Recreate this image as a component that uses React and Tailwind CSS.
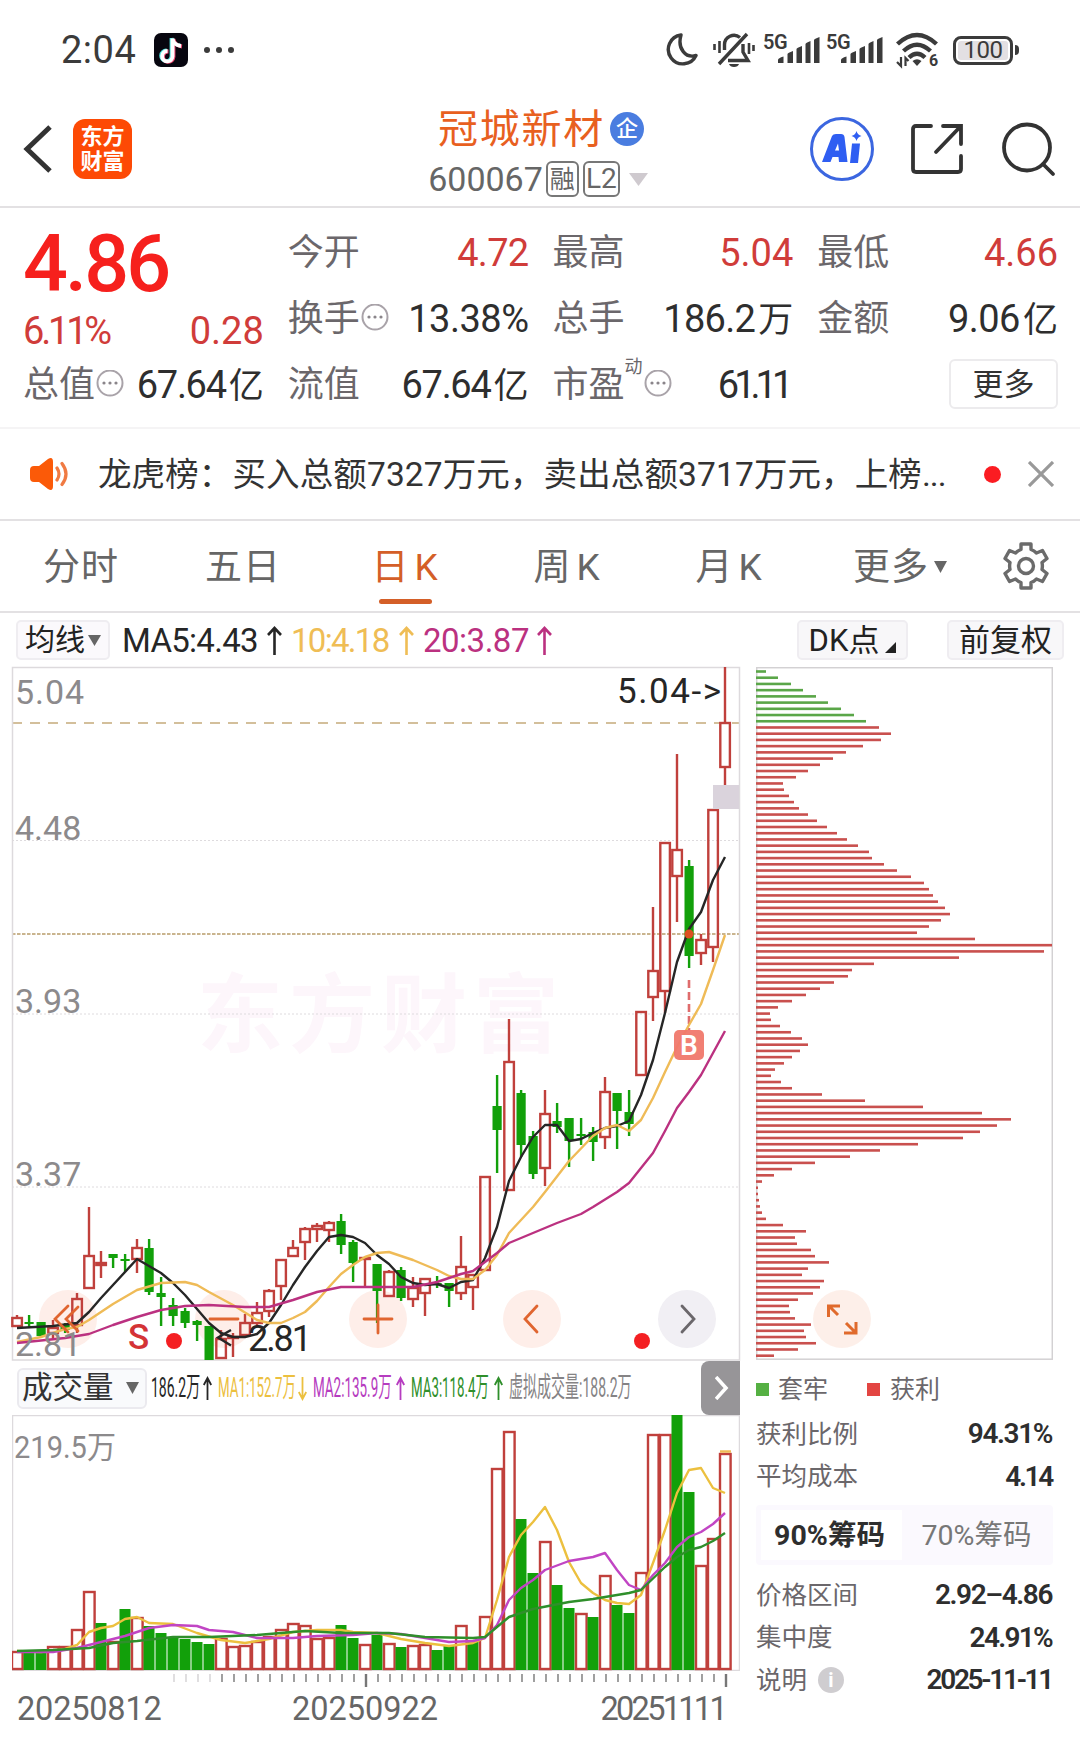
import React from 'react';

const RED = '#c0403c';
const GREEN = '#12a00a';

// [up, bodyTop, bodyBottom, wickTop, wickBottom]
const candles = [
  [1, 651, 659, 648, 660], [0, 655, 657, 648, 661], [0, 655, 669, 655, 670], [1, 661, 666, 653, 673],
  [0, 658, 663, 656, 666], [1, 632, 658, 626, 666], [1, 589, 621, 540, 621], [1, 596, 598, 584, 611],
  [0, 587, 591, 587, 601], [0, 592, 594, 587, 605], [1, 581, 592, 572, 606], [0, 581, 625, 572, 628],
  [0, 626, 630, 610, 659], [0, 638, 649, 631, 659], [0, 644, 656, 641, 661], [0, 654, 658, 653, 674],
  [0, 659, 693, 659, 693], [1, 672, 691, 663, 691], [1, 670, 671, 666, 690], [1, 656, 668, 647, 669],
  [1, 646, 656, 635, 660], [1, 624, 644, 622, 650], [1, 593, 619, 593, 633], [1, 581, 589, 573, 590],
  [1, 562, 575, 560, 593], [1, 559, 562, 556, 575], [1, 556, 563, 554, 575], [0, 554, 578, 547, 587],
  [0, 575, 596, 573, 615], [1, 591, 592, 591, 619], [0, 597, 624, 597, 656], [1, 605, 629, 603, 630],
  [0, 603, 631, 600, 634], [1, 621, 632, 610, 640], [1, 612, 626, 612, 649], [0, 616, 618, 609, 621],
  [0, 616, 624, 616, 640], [1, 600, 626, 569, 633], [1, 608, 620, 608, 643], [1, 510, 603, 510, 603],
  [0, 439, 463, 408, 506], [1, 395, 523, 352, 523], [0, 426, 478, 423, 490], [0, 469, 507, 464, 512],
  [1, 447, 501, 423, 519], [0, 454, 460, 436, 466], [0, 451, 474, 451, 500], [0, 467, 469, 451, 478],
  [0, 465, 475, 460, 494], [1, 425, 470, 410, 482], [0, 426, 444, 426, 482], [0, 445, 457, 423, 469],
  [1, 345, 408, 345, 408], [1, 304, 330, 240, 354], [1, 176, 324, 176, 346], [1, 183, 209, 87, 255],
  [0, 199, 289, 193, 301], [1, 273, 286, 267, 298], [1, 143, 280, 143, 295], [1, 56, 100, 0, 118],
];

// [candle index, y]
const ma5 = [[0, 661], [3, 659], [5, 656], [6, 645], [7, 631], [10, 592], [12, 606], [13, 616], [14, 628], [15, 642], [16, 656], [17, 666], [18, 670], [19, 670], [20, 667], [21, 656], [22, 638], [23, 618], [24, 600], [25, 584], [26, 570], [27, 568], [28, 570], [29, 576], [30, 588], [31, 597], [32, 610], [33, 616], [34, 618], [35, 617], [36, 621], [37, 615], [38, 613], [39, 591], [40, 560], [41, 514], [42, 490], [43, 470], [44, 458], [45, 458], [46, 474], [47, 472], [48, 466], [49, 461], [50, 459], [51, 454], [52, 428], [53, 393], [54, 346], [55, 295], [56, 262], [57, 245], [58, 213], [59, 190]];
const ma10 = [[0, 675], [2, 670], [4, 662], [5, 660], [6, 653], [8, 637], [10, 623], [12, 616], [14, 615], [15, 618], [16, 625], [18, 638], [20, 653], [21, 656], [22, 656], [23, 651], [24, 645], [25, 634], [26, 620], [27, 607], [28, 598], [29, 590], [30, 586], [31, 585], [33, 593], [35, 603], [36, 609], [37, 612], [38, 612], [39, 603], [40, 588], [41, 566], [42, 553], [43, 540], [44, 525], [46, 494], [48, 469], [49, 461], [50, 458], [51, 464], [52, 453], [53, 431], [54, 405], [55, 380], [56, 358], [57, 337], [58, 303], [59, 268]];
const ma20 = [[0, 676], [4, 671], [6, 667], [8, 658], [10, 650], [12, 643], [14, 639], [16, 638], [19, 640], [21, 640], [23, 633], [25, 625], [27, 620], [30, 620], [33, 620], [35, 615], [37, 607], [38, 604], [39, 595], [40, 586], [41, 576], [42, 571], [43, 566], [45, 556], [47, 547], [48, 540], [50, 525], [51, 516], [52, 501], [53, 486], [54, 464], [55, 441], [56, 425], [57, 408], [59, 364]];

const volumes = [236, 238, 238, 231, 231, 214, 176, 208, 226, 194, 202, 211, 218, 222, 224, 227, 229, 223, 231, 230, 226, 221, 214, 208, 210, 223, 222, 210, 223, 229, 220, 228, 232, 230, 229, 235, 231, 210, 225, 201, 53, 16, 104, 158, 126, 170, 193, 198, 202, 160, 190, 198, 157, 19, 19, 0, 77, 150, 123, 38];
const volumeUp = [0, 3, 4, 5, 6, 8, 10, 17, 18, 19, 20, 21, 22, 23, 24, 25, 26, 29, 31, 33, 34, 37, 39, 40, 41, 44, 47, 49, 52, 53, 54, 57, 58, 59];

const vol1 = [[0, 236], [2, 237], [4, 234], [5, 230], [6, 217], [7, 213], [8, 211], [9, 204], [10, 202], [11, 208], [13, 209], [15, 218], [17, 225], [19, 228], [21, 224], [23, 217], [25, 215], [27, 215], [28, 217], [30, 218], [32, 224], [34, 228], [36, 231], [38, 228], [39, 223], [40, 185], [41, 142], [42, 120], [43, 107], [44, 92], [45, 115], [46, 147], [47, 168], [48, 178], [49, 185], [50, 188], [51, 189], [52, 180], [53, 148], [54, 115], [55, 78], [56, 55], [57, 53], [58, 73], [59, 78]];
const vol2 = [[0, 237], [3, 237], [5, 233], [7, 227], [9, 221], [11, 213], [13, 210], [15, 211], [16, 215], [18, 217], [20, 223], [23, 223], [25, 221], [28, 220], [30, 218], [32, 219], [34, 223], [36, 227], [38, 226], [39, 223], [40, 210], [41, 185], [42, 173], [43, 165], [44, 155], [46, 146], [48, 142], [49, 138], [50, 155], [51, 170], [52, 175], [53, 160], [54, 148], [55, 132], [56, 122], [57, 117], [58, 109], [59, 98]];
const vol3 = [[0, 236], [3, 235], [6, 233], [8, 228], [10, 226], [13, 222], [16, 222], [20, 220], [24, 216], [27, 218], [31, 218], [34, 222], [38, 223], [39, 222], [40, 212], [41, 202], [43, 194], [46, 187], [48, 184], [50, 180], [51, 178], [52, 175], [54, 152], [55, 142], [56, 135], [57, 132], [58, 126], [59, 118]];

const chips = [
  10, 22, 35, 47, 60, 72, 85, 98, 110,
  123, 135, 125, 107, 90, 77, 64, 52, 40, 27, 28, 33, 38, 43, 52, 61, 71, 81, 91, 102,
  113, 116, 128, 141, 155, 168, 173, 177, 182, 189, 194, 185, 173, 161, 219, 296, 288, 203, 118, 96,
  92, 78, 64, 50, 36, 22, 14, 15, 24, 35, 46, 52, 44, 36, 28, 19, 15, 25, 36, 66,
  109, 167, 226, 255, 241, 224, 207, 162, 124, 94, 59, 36, 18, 6, 2, 2, 3, 4, 6, 10,
  27, 50, 39, 41, 55, 59, 73, 52, 46, 68, 64, 57, 42, 33, 34, 39, 55, 48, 50, 60, 42, 18,
];

// chart controls, drawn along the bottom of the price chart
const controls = [
  { x: 56, d: 'M0 -13L-13 0L0 13M10 -12L-2 0L10 12' },
  { x: 212, d: 'M-14 0H14' },
  { x: 366, d: 'M-14 0H14M0 -14V14' },
  { x: 520, d: 'M5 -13L-7 0L5 13' },
  { x: 675, d: 'M-5 -13L7 0L-5 13', gray: true },
];

const cx = (i) => 5 + 12 * i;
const toPoints = (line) => line.map(([i, y]) => `${cx(i)},${y}`).join(' ');

const Line = ({ data, color, width = 2.4 }) => (
  <polyline points={toPoints(data)} fill="none" stroke={color} strokeWidth={width} strokeLinejoin="round" />
);

const Signal = () => (
  <div className="flex w-[57px] h-[34px]">
    <span className="w-[26px] shrink-0 text-[20px] leading-[24px] -mt-[3px] font-semibold tracking-[-0.5px]">5G</span>
    <svg className="-ml-[11px] mt-[4px] shrink-0" width="42" height="27" fill="#3b3b3b">
      <path d="M0 26v-3q0-2 5.500-3.500v6.500z M9.500 26v-9q0-1 5.500-3v12z M18.500 26V12q0-1 5.500-3v17z M27.500 26V7q0-1 5-3v22z M36 26V3q0-1 5.500-3v26z" />
    </svg>
  </div>
);

const StatusBar = () => (
  <div className="h-[100px] pl-[61px] pr-[61px] flex items-center text-[#3b3b3b]">
    <span className="text-[38px] leading-none w-[93px] tracking-[0.5px]">2:04</span>
    <svg width="34" height="34" viewBox="0 0 34 34">
      <rect width="34" height="34" rx="7" fill="#07060f" />
      <g fill="none" strokeWidth="3.800">
        <path d="M17.500 5v18a5.200 5.200 0 1 1-5-5.500M17.500 5q1 6.500 8.500 7.500" stroke="#4fe0dc" />
        <path d="M19.500 6v18a5.200 5.200 0 1 1-5-5.500M19.500 6q1 6.500 8.500 7.500" stroke="#ee4a74" />
        <path d="M18.500 5.500v18a5.200 5.200 0 1 1-5-5.500M18.500 5.500q1 6.500 8.500 7.500" stroke="#fff" />
      </g>
    </svg>
    <div className="flex gap-[6px] ml-[16px]">
      <i className="size-[6px] rounded-full bg-[#3b3b3b]" />
      <i className="size-[6px] rounded-full bg-[#3b3b3b]" />
      <i className="size-[6px] rounded-full bg-[#3b3b3b]" />
    </div>
    <div className="ml-auto flex items-center">
      <svg width="34" height="34" viewBox="0 0 34 34" fill="none" stroke="#3b3b3b" strokeWidth="3.400" strokeLinejoin="round">
        <path d="M17 2a14.500 14.500 0 1 0 15 20.500C22 25.500 13 16 17 2z" />
      </svg>
      <svg className="ml-[15px]" width="42" height="36" viewBox="0 0 42 36" fill="none" stroke="#3b3b3b" strokeWidth="3.400">
        <path d="M11.500 18v-5a9.500 9.500 0 0 1 15.500-7.500M30 12v8l5 8.500H15M34 2L6 32" />
        <path d="M1.500 12v6M6.500 9v12M36 11v11M40.500 13v6" strokeWidth="2.600" />
        <path d="M16 32h10q-1 3-5 3t-5-3z" fill="#3b3b3b" stroke="none" />
      </svg>
      <div className="ml-[8px] mr-[6px]"><Signal /></div>
      <Signal />
      <svg className="ml-[13px] overflow-visible" width="43" height="36" viewBox="0 0 43 36" fill="none" stroke="#3b3b3b" strokeWidth="4.400">
        <path d="M1.500 12q19.500-18 39 0M7.500 19q13.500-12.500 27 0" />
        <path d="M13 25.500q8-7.500 16 0" />
        <path d="M16.500 29q4.500-3.500 9 0l-4.500 5z" fill="#3b3b3b" stroke="none" />
        <path d="M5 25v9l-4-4M9.500 34v-8l3 3" strokeWidth="2.200" />
        <text x="33" y="34" fontSize="16" fontWeight="700" fill="#3b3b3b" stroke="none">6</text>
      </svg>
      <div className="ml-[14px] w-[60px] h-[29px] border-[3px] border-[#3b3b3b] rounded-[8px] p-[2px]">
        <div className="h-full rounded-[3px] bg-[#e3e0e3] flex items-center justify-center text-[24px] leading-none tracking-[-0.5px]">100</div>
      </div>
      <i className="ml-[2px] w-[4px] h-[10px] rounded-r bg-[#3b3b3b]" />
    </div>
  </div>
);

const Header = () => (
  <div className="h-[108px] border-b-2 border-[#e3e1e3] pl-[22px] pr-[24px] flex justify-between">
    <div className="flex items-center w-[300px] pb-[8px]">
      <svg width="31" height="52" viewBox="0 0 31 52" fill="none" stroke="#333" strokeWidth="5">
        <path d="M28 4L5 26l23 22" />
      </svg>
      <div className="ml-[20px] w-[59px] h-[60px] rounded-[12px] bg-[#fd4a05] text-white font-bold text-[22px] leading-[25px] flex flex-col items-center justify-center">
        <span>东方</span>
        <span>财富</span>
      </div>
    </div>
    <div className="flex flex-col items-center pt-[6px]">
      <div className="flex items-center h-[46px] pl-[4px]">
        <span className="text-[40px] leading-none tracking-[1.700px] pt-[2px] text-[#e8601f]">冠城新材</span>
        <span className="ml-[5px] size-[34px] rounded-full bg-[#4a7de0] text-white text-[22px] font-medium leading-none flex items-center justify-center">企</span>
      </div>
      <div className="flex items-center h-[44px] pr-[2px] text-[#666] mt-[5px]">
        <span className="text-[34px] leading-none">600067</span>
        <span className="ml-[3px] w-[33px] h-[36px] border-2 border-[#777] rounded-[6px] text-[25px] leading-none flex items-center justify-center">融</span>
        <span className="ml-[4px] w-[37px] h-[36px] border-2 border-[#777] rounded-[6px] text-[28px] leading-none flex items-center justify-center">L2</span>
        <svg className="ml-[9px]" width="19" height="13"><path d="M0 0h19l-9.500 13z" fill="#cfcacf" /></svg>
      </div>
    </div>
    <div className="flex items-center justify-end w-[300px] pb-[8px]">
      <svg width="66" height="66" viewBox="0 0 66 66">
        <circle cx="33" cy="33" r="30.500" fill="none" stroke="#3b66e0" strokeWidth="3" />
        <g fill="#2f5ef2">
          <path d="M13 46l10-26q1-2 4-2h5q3 0 3.500 3l3 25h-8.500l-.5-5h-6l-2 5z M26 34.500h4l-1-7z" fillRule="evenodd" />
          <path d="M43 27.500h8L49 47h-8z" />
          <path d="M47.500 15q1 4 5 5-4 1-5 5-1-4-5-5 4-1 5-5z" />
        </g>
      </svg>
      <svg className="ml-[36px]" width="52" height="52" viewBox="0 0 52 52" fill="none" stroke="#333" strokeWidth="3.800" strokeLinecap="round">
        <path d="M20 3H5q-3 0-3 3v40q0 3 3 3h42q3 0 3-3V33M32 3h18v18M49 4L25 29" />
      </svg>
      <svg className="ml-[38px]" width="55" height="55" viewBox="0 0 55 55" fill="none" stroke="#333" strokeWidth="3.800" strokeLinecap="round">
        <circle cx="26" cy="25.500" r="23" />
        <path d="M42 42l10 10" />
      </svg>
    </div>
  </div>
);

const More = () => (
  <svg className="ml-[1px]" width="28" height="28" viewBox="0 0 28 28">
    <circle cx="14" cy="13" r="12.500" fill="none" stroke="#a9a3a9" strokeWidth="2" />
    <g fill="#8a858a"><circle cx="8" cy="13" r="1.600" /><circle cx="14" cy="13" r="1.600" /><circle cx="20" cy="13" r="1.600" /></g>
  </svg>
);

const Stat = ({ label, value, unit, red, info, sup }) => (
  <div className="h-[66px] flex items-center leading-none">
    <span className="text-[36px] pt-[2px] text-[#6b676b]">{label}</span>
    {sup && <span className="text-[18px] text-[#6b676b] -mt-[34px]">{sup}</span>}
    {info && <More />}
    <span className={`ml-auto pt-[2px] text-[38px] ${red ? 'text-[#d03c3a]' : 'text-[#2e2e2e]'}`}>
      {value}
      {unit && <span className="text-[35px] ml-[3px]">{unit}</span>}
    </span>
  </div>
);

const Quote = () => (
  <div className="h-[221px] border-b-2 border-[#f5f4f5] pl-[23px] pr-[22px] flex gap-[24px]">
    <div className="w-[241px]">
      <div className="h-[106px] pt-[17px] text-[79px] leading-none font-medium text-[#f6201d] tracking-[-2.800px]">4.86</div>
      <div className="h-[37px] pb-[4px] flex justify-between items-center text-[38px] leading-none text-[#d03c3a]">
        <span className="tracking-[-3.200px]">6.11%</span>
        <span>0.28</span>
      </div>
      <Stat label="总值" info value={<span className="tracking-[-1.300px]">67.64</span>} unit="亿" />
    </div>
    <div className="w-[241px] pt-[11px]">
      <Stat label="今开" value={<span className="tracking-[-0.700px]">4.72</span>} red />
      <Stat label="换手" info value={<span className="tracking-[-0.500px]">13.38%</span>} />
      <Stat label="流值" value={<span className="tracking-[-1.300px]">67.64</span>} unit="亿" />
    </div>
    <div className="w-[241px] pt-[11px]">
      <Stat label="最高" value="5.04" red />
      <Stat label="总手" value={<span className="tracking-[-0.700px]">186.2</span>} unit="万" />
      <Stat label="市盈" sup="动" info value={<span className="tracking-[-5px] mr-[5px]">61.11</span>} />
    </div>
    <div className="w-[241px] pt-[11px]">
      <Stat label="最低" value="4.66" red />
      <Stat label="金额" value={<span className="tracking-[-0.500px]">9.06</span>} unit="亿" />
      <div className="h-[66px] flex items-center justify-end">
        <span className="w-[109px] h-[50px] border-2 border-[#ecebed] rounded-[6px] flex items-center justify-center text-[31px] leading-none text-[#333]">更多</span>
      </div>
    </div>
  </div>
);

const News = () => (
  <div className="h-[92px] border-b-2 border-[#e3e1e3] pl-[29px] pr-[26px] flex items-center">
    <svg width="40" height="34" viewBox="0 0 40 34">
      <path d="M1 13q0-4 4-4h5L19 2q5-3 5 3v24q0 6-5 3L10 25H5q-4 0-4-4z" fill="#fb5a08" />
      <path d="M28 11q4 6 0 12M33 6.500q8 10.500 0 21" fill="none" stroke="#f07a42" strokeWidth="3.200" strokeLinecap="round" />
    </svg>
    <span className="ml-[29px] pt-[2px] text-[33.500px] leading-none text-[#333] whitespace-nowrap w-[850px] tracking-[0.120px]">
      龙虎榜：买入总额7327万元，卖出总额3717万元，上榜<span className="tracking-[-1px]">...</span>
    </span>
    <i className="ml-auto size-[17px] rounded-full bg-[#fb1c22]" />
    <svg className="ml-[27px]" width="26" height="26" viewBox="0 0 26 26" stroke="#999" strokeWidth="3.200"><path d="M1 1l24 24M25 1L1 25" /></svg>
  </div>
);

const tabs = ['分时', '五日', '日K', '周K', '月K'];

const Tabs = () => (
  <div className="h-[92px] border-b-2 border-[#e3e1e3] flex text-[37px] leading-none text-[#666] tracking-[1px]">
    {tabs.map((t) => (
      <div key={t} className={`w-[162px] flex flex-col items-center pt-[28px] ${t === '日K' ? 'text-[#d45f28]' : ''}`}>
        {t.endsWith('K') ? <span>{t[0]}<span className="ml-[5px]">K</span></span> : <span>{t}</span>}
        {t === '日K' && <i className="mt-[13px] w-[53px] h-[5px] rounded-full bg-[#d45f28]" />}
      </div>
    ))}
    <div className="w-[180px] flex justify-center pt-[28px]">
      <span>更多</span>
      <svg className="ml-[5px] mt-[12px]" width="13" height="12"><path d="M0 0h13l-6.500 12z" fill="#666" /></svg>
    </div>
    <svg className="ml-[12px] mt-[21px]" width="48" height="48" viewBox="0 0 48 48" fill="none" stroke="#6b6b6b" strokeWidth="3.400" strokeLinejoin="round">
      <path d="M19 2h10v5.500q3 1 5.500 3.500l6-2.500 4.500 8-5 4q.8 3.500 0 7l5 4-4.500 8-6-2.500Q32 39.500 29 40.500V46H19v-5.500q-3-1-5.500-3.500l-6 2.500-4.500-8 5-4q-.8-3.500 0-7l-5-4 4.500-8 6 2.500Q16 8.500 19 7.500z" />
      <circle cx="24" cy="24" r="7.500" />
    </svg>
  </div>
);

const Ma = ({ className, color, text }) => (
  <span className={`flex items-center ${className}`}>
    <span>{text}</span>
    <svg className="ml-auto mr-[9px]" width="15" height="29" fill="none" stroke={color} strokeWidth="2.600"><path d="M7.500 29V2M1 9l6.500-7L14 9" /></svg>
  </span>
);

const Indicators = () => (
  <div className="h-[54px] pl-[16px] pr-[16px] flex items-center text-[33px] leading-none whitespace-nowrap">
    <span className="w-[94px] h-[40px] border-2 border-[#efedf1] bg-[#fbf9fc] rounded-[5px] flex items-center justify-center text-[30px] text-[#222]">
      均线
      <svg className="ml-[3px]" width="13" height="11"><path d="M0 0h13l-6.500 11z" fill="#666" /></svg>
    </span>
    <Ma className="ml-[12px] w-[169px] tracking-[-0.700px] text-[#262626]" color="#262626" text="MA5:4.43" />
    <Ma className="w-[132px] tracking-[-1.700px] text-[#efbd55]" color="#efbd55" text="10:4.18" />
    <Ma className="w-[138px] tracking-[-0.500px] text-[#bb3180]" color="#bb3180" text="20:3.87" />
    <span className="ml-auto w-[111px] h-[40px] border-2 border-[#efedf1] bg-[#f8f7f9] rounded-[5px] flex items-center justify-center text-[31px] text-[#222]">
      DK点
      <svg className="ml-[6px] mt-[15px]" width="11" height="11"><path d="M11 0v11H0z" fill="#222" /></svg>
    </span>
    <span className="ml-[39px] w-[117px] h-[40px] border-2 border-[#efedf1] bg-[#f8f7f9] rounded-[5px] flex items-center justify-center text-[31px] text-[#222]">前复权</span>
  </div>
);

const PriceChart = () => (
  <svg width="728" height="694" className="block" overflow="visible">
    <text x="369" y="379" textAnchor="middle" fontSize="86" fontWeight="700" letterSpacing="6" fill="#fdf6fb" style={{ fontFamily: '"Noto Sans CJK SC"' }}>东方财富</text>
    <path d="M0 173.500h728M0 347h728M0 520h728" stroke="#dedbde" strokeDasharray="2 2" />
    <path d="M0 56h728" stroke="#d3bf9b" strokeWidth="1.800" strokeDasharray="10 8" />
    <path d="M0 267h728" stroke="#c9b48e" strokeWidth="1.800" strokeDasharray="3.500 1.500" />
    <rect x="0.500" y="0.500" width="727" height="692.500" fill="none" stroke="#dddadd" strokeWidth="1.500" />
    <g fontSize="34" fill="#8c8a8c">
      <text x="3" y="37" textLength="69">5.04</text>
      <text x="3" y="173">4.48</text>
      <text x="3" y="346">3.93</text>
      <text x="3" y="519">3.37</text>
    </g>
    {controls.map((c) => (
      <circle key={c.x} cx={c.x} cy="652" r="29" fill={c.gray ? '#f1eff4' : '#feeee9'} />
    ))}
    {candles.map(([up, top, bottom, high, low], i) => (up ? (
      <g key={i} stroke={RED} strokeWidth="2.400" fill="none">
        <path d={`M${cx(i)} ${high}V${top}M${cx(i)} ${bottom}V${low}`} />
        <rect x={cx(i) - 4.7} y={top} width="9.600" height={bottom - top} />
      </g>
    ) : (
      <g key={i} fill={GREEN}>
        <rect x={cx(i) - 1.1} y={high} width="2.400" height={low - high} />
        <rect x={cx(i) - 4.5} y={top} width="9.200" height={bottom - top} />
      </g>
    )))}
    <rect x="701" y="118" width="26" height="24" fill="#dad3dc" />
    <path d="M677 313v50" stroke="#df6c6c" strokeWidth="2.600" strokeDasharray="8 4" />
    <Line data={ma5} color="#262626" />
    <Line data={ma10} color="#efbb57" />
    <Line data={ma20} color="#bb3180" />
    <rect x="662" y="363" width="30" height="30" rx="5" fill="#f0786c" fillOpacity="0.950" />
    <text x="677" y="388" textAnchor="middle" fontSize="28" fontWeight="600" fill="#fff">B</text>
    <circle cx="677" cy="267" r="4.500" fill="#dc5022" />
    <text x="605" y="36" fontSize="35" fill="#262626" textLength="104">5.04-&gt;</text>
    {controls.map((c) => (
      <path key={c.x} d={c.d} transform={`translate(${c.x} 652)`} fill="none" stroke={c.gray ? '#6b676b' : '#e06530'} strokeWidth="2.800" strokeLinecap="round" />
    ))}
    <text x="3" y="689" fontSize="34" fill="#8c8a8c">2.81</text>
    <text x="116" y="682" fontSize="35" fontWeight="500" fill="#d43336">S</text>
    <circle cx="162" cy="674" r="8" fill="#f41f22" />
    <circle cx="630" cy="674" r="8" fill="#f41f22" />
    <path d="M219 663L206 670.500L219 678.500" fill="none" stroke="#262626" strokeWidth="2.400" />
    <text x="236" y="684" fontSize="36" fill="#262626" textLength="64">2.81</text>
  </svg>
);

const ChipChart = () => (
  <svg width="297" height="693" className="block">
    <rect x="0.700" y="0.700" width="295.600" height="691.500" fill="none" stroke="#d3d1d3" strokeWidth="1.500" />
    {chips.map((w, i) => (
      <rect key={i} x="0" y={3.2 + i * 6.22} width={w} height="2.600" fill={i < 9 ? '#5aa648' : '#c9504e'} />
    ))}
    <circle cx="86" cy="652" r="29" fill="#fdeee8" fillOpacity="0.950" />
    <path d="M82 648L73 639M72.500 650V639H84M90 656L99 665M100 655V666H88" fill="none" stroke="#e06a2c" strokeWidth="3" />
  </svg>
);

const VolumeChart = () => (
  <svg width="728" height="256" className="block">
    <rect x="0.500" y="0.500" width="727" height="255" fill="none" stroke="#dddadd" strokeWidth="1.500" />
    <text x="2" y="43" fontSize="31" fill="#8c8a8c" textLength="102" lengthAdjust="spacingAndGlyphs">219.5万</text>
    {volumes.map((top, i) => (volumeUp.includes(i) ? (
      <rect key={i} x={cx(i) - 5} y={top + 1} width="10.600" height={253 - top} fill="#fff" stroke={RED} strokeWidth="2.400" />
    ) : (
      <rect key={i} x={cx(i) - 5.5} y={top} width="11" height={255 - top} fill={GREEN} />
    )))}
    <path d="M708 36.500h11" stroke="#efbb57" strokeWidth="2.500" />
    <Line data={vol1} color="#ecc03f" />
    <Line data={vol2} color="#c145c4" />
    <Line data={vol3} color="#2f8f2b" />
  </svg>
);

const DateAxis = () => (
  <div className="w-[728px]">
    <svg width="728" height="17" className="block" overflow="visible">
      {volumes.map((_, i) => i > 12 && (
        <path key={i} d={`M${cx(i) + 1} 3v${i === 29 || i === 59 ? 13 : 8}`} stroke={i < 17 ? '#d3d1d3' : '#777'} strokeWidth={i === 29 || i === 59 ? 2.4 : 1.4} />
      ))}
    </svg>
    <div className="pl-[5px] pr-[15px] pt-[5px] flex justify-between text-[32.500px] leading-none text-[#666]">
      <span className="w-[200px] tracking-[-0.200px]">20250812</span>
      <span className="mr-[12px]">20250922</span>
      <span className="w-[200px] text-right tracking-[-2.700px]">20251111</span>
    </div>
  </div>
);

const ThinArrow = ({ down }) => (
  <svg className="ml-auto mr-[6px] shrink-0" width="9" height="25" fill="none" stroke="currentColor" strokeWidth="1.800">
    <path d={down ? 'M4.500 1v22M.8 16l3.700 7 3.700-7' : 'M4.500 24V2M.8 9l3.700-7 3.700 7'} />
  </svg>
);

const VolumeHeader = () => (
  <div className="h-[54px] pl-[5px] flex items-center leading-none text-[28px] whitespace-nowrap">
    <span className="w-[130px] h-[41px] border-2 border-[#ebeaef] bg-[#f9fafc] rounded-[6px] flex items-center pl-[3px] text-[30.500px] text-[#333]">
      成交量
      <svg className="ml-[12px]" width="13" height="12"><path d="M0 0h13l-6.500 12z" fill="#666" /></svg>
    </span>
    <span className="ml-[4px] w-[67px] flex items-center text-[#262626]">
      <span className="w-[48px]"><span className="inline-block origin-left scale-x-[0.500]">186.2万</span></span>
      <ThinArrow />
    </span>
    <span className="w-[95px] flex items-center text-[#ecc03f]">
      <span className="w-[77px]"><span className="inline-block origin-left scale-x-[0.475]">MA1:152.7万</span></span>
      <ThinArrow down />
    </span>
    <span className="w-[98px] flex items-center text-[#b63cc0]">
      <span className="w-[77px]"><span className="inline-block origin-left scale-x-[0.480]">MA2:135.9万</span></span>
      <ThinArrow />
    </span>
    <span className="w-[98px] flex items-center text-[#2f8f2b]">
      <span className="w-[77px]"><span className="inline-block origin-left scale-x-[0.475]">MA3:118.4万</span></span>
      <ThinArrow />
    </span>
    <span className="w-[150px] text-[#858385]"><span className="inline-block origin-left scale-x-[0.500]">虚拟成交量:188.2万</span></span>
    <span className="ml-auto w-[39px] h-[54px] rounded-l-[8px] bg-[#979598] flex items-center justify-center">
      <svg className="ml-[3px]" width="14" height="24" viewBox="0 0 14 24" fill="none" stroke="#fff" strokeWidth="3.600"><path d="M1 1l10 11L1 23" /></svg>
    </span>
  </div>
);

const ChipRow = ({ label, value, className = '', tight = 'tracking-[-1.400px]' }) => (
  <div className={`h-[42.500px] pr-[1px] flex items-center justify-between leading-none ${className}`}>
    <span className="flex items-center text-[25.500px] text-[#6b676b]">{label}</span>
    <span className={`text-[28px] font-semibold text-[#2e2e2e] ${tight}`}>{value}</span>
  </div>
);

const ChipInfo = () => (
  <div className="w-[297px] pt-[6px]">
    <div className="h-[47px] flex items-center text-[25px] leading-none text-[#6b676b]">
      <i className="size-[13px] bg-[#55b043] mr-[9px]" />套牢
      <i className="size-[13px] bg-[#e34542] ml-[39px] mr-[10px]" />获利
    </div>
    <ChipRow label="获利比例" value="94.31%" />
    <ChipRow label="平均成本" value="4.14" tight="tracking-[-2.300px]" />
    <div className="mt-[7px] h-[60px] bg-[#fbf9fe] rounded-[4px] p-[5px] flex items-center leading-none text-[28.500px]">
      <span className="w-[141px] h-[50px] bg-white flex items-center justify-center pt-[3px] pr-[4px] font-bold text-[#2e2e2e]">90%筹码</span>
      <span className="flex-1 pt-[3px] pl-[3px] text-center text-[#777]">70%筹码</span>
    </div>
    <ChipRow label="价格区间" value="2.92–4.86" className="mt-[9px]" />
    <ChipRow label="集中度" value="24.91%" tight="tracking-[-1.700px]" />
    <ChipRow
      label={<>说明<i className="ml-[11px] size-[26px] rounded-full bg-[#cfcdd0] text-white text-[20px] font-bold not-italic flex items-center justify-center">i</i></>}
      value="2025-11-11"
      tight="tracking-[-2.300px]"
    />
  </div>
);

const App = () => (
  <div className="w-[1080px] h-[1762px] bg-white overflow-hidden font-[Roboto,'Noto_Sans_CJK_SC',sans-serif]">
    <StatusBar />
    <Header />
    <Quote />
    <News />
    <Tabs />
    <Indicators />
    <div className="flex pl-[12px]">
      <div className="w-[728px]">
        <PriceChart />
        <VolumeHeader />
        <VolumeChart />
        <DateAxis />
      </div>
      <div className="ml-[16px]">
        <ChipChart />
        <ChipInfo />
      </div>
    </div>
  </div>
);

export default App;
